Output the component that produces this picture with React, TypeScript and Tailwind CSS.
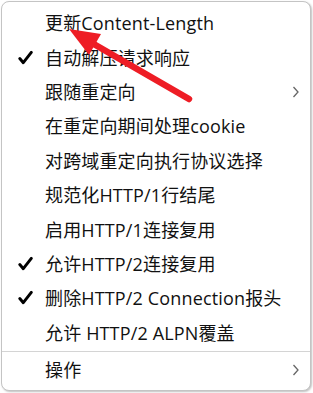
import React from "react";

type Item = { label: string; checked?: boolean; sub?: boolean };

const items: Item[] = [
  { label: "更新Content-Length" },
  { label: "自动解压请求响应", checked: true },
  { label: "跟随重定向", sub: true },
  { label: "在重定向期间处理cookie" },
  { label: "对跨域重定向执行协议选择" },
  { label: "规范化HTTP/1行结尾" },
  { label: "启用HTTP/1连接复用" },
  { label: "允许HTTP/2连接复用", checked: true },
  { label: "删除HTTP/2 Connection报头", checked: true },
  { label: "允许 HTTP/2 ALPN覆盖" },
];

function Check() {
  return (
    <svg width="15" height="15" viewBox="0 0 15 15" className="absolute left-[16px] top-1/2 -translate-y-1/2">
      <path d="M1.8 8 L5.3 12.2 L13.3 1.8" fill="none" stroke="#000" strokeWidth="2.9" strokeLinecap="round" strokeLinejoin="round" />
    </svg>
  );
}

function Chevron() {
  return (
    <svg width="8" height="12" viewBox="0 0 8 12" className="absolute right-[10px] top-1/2 -translate-y-1/2">
      <path d="M1.5 1 L6 6 L1.5 11" fill="none" stroke="#666" strokeWidth="1.3" />
    </svg>
  );
}

function Row({ item }: { item: Item }) {
  return (
    <div className="relative flex h-[34.4px] items-center pl-[43px] text-[18px] leading-none tracking-[0.15px] text-[#111]">
      {item.checked && <Check />}
      <span>{item.label}</span>
      {item.sub && <Chevron />}
    </div>
  );
}

export default function App() {
  return (
    <div
      className="relative h-[393px] w-[313px] bg-white p-[1px]"
      style={{ fontFamily: '"Open Sans", "Noto Sans CJK SC", sans-serif' }}
    >
      <div className="flex h-[390px] w-[310px] flex-col rounded-[8px] border border-[#c4c4c4] bg-white pt-[4px] shadow-[1px_1px_2px_rgba(0,0,0,0.25)]">
        {items.map((it) => (
          <Row key={it.label} item={it} />
        ))}
        <div className="my-[1px] h-px bg-[#d4d4d4]" />
        <Row item={{ label: "操作", sub: true }} />
      </div>
      <svg className="pointer-events-none absolute left-0 top-0" width="313" height="393">
        <line x1="92" y1="43" x2="189" y2="99" stroke="#ee1d25" strokeWidth="6.5" strokeLinecap="round" />
        <polygon points="69,29 89,55 101,34" fill="#ee1d25" />
      </svg>
    </div>
  );
}
